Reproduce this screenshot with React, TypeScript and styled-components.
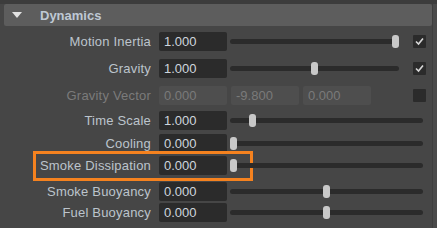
import React from "react";
import styled, { createGlobalStyle } from "styled-components";

const Global = createGlobalStyle`
  html, body { margin: 0; padding: 0; background: #464646; }
  body { font-family: "Liberation Sans", Arial, sans-serif; font-size: 13px; }
`;

const Window = styled.div`
  width: 437px;
  height: 228px;
  display: flex;
  background: #464646;
  border-top: 4px solid #3c3c3c;
  box-sizing: border-box;
  overflow: hidden;
`;

const Main = styled.div`
  flex: 1;
  display: flex;
  flex-direction: column;
  padding-left: 4px;
`;

const ScrollGutter = styled.div`
  width: 5px;
  box-sizing: border-box;
  border-left: 1px solid #3e3e3e;
  background: #4a4a4a;
`;

const Header = styled.div`
  height: 22px;
  display: flex;
  align-items: center;
  background: #5d5d5d;
  border-radius: 2px;
`;

const Caret = styled.span`
  width: 0;
  height: 0;
  margin-left: 8px;
  border-left: 5px solid transparent;
  border-right: 5px solid transparent;
  border-top: 6px solid #e2e2e2;
`;

const HeaderTitle = styled.span`
  margin-left: 18px;
  font-weight: bold;
  color: #bfc9d4;
`;

const Rows = styled.div`
  display: flex;
  flex-direction: column;
  padding-top: 6px;
`;

const Row = styled.div<{ $h: number }>`
  position: relative;
  display: flex;
  align-items: flex-start;
  height: ${(p) => p.$h}px;
  flex-shrink: 0;
`;

const Label = styled.div<{ $disabled?: boolean }>`
  width: 147px;
  margin-right: 8px;
  text-align: right;
  line-height: 19px;
  white-space: nowrap;
  letter-spacing: 0.2px;
  color: ${(p) => (p.$disabled ? "#7b7b7b" : "#bcc4cc")};
`;

const Field = styled.div<{ $disabled?: boolean }>`
  width: 68px;
  height: 19px;
  box-sizing: border-box;
  padding-left: 5px;
  line-height: 19px;
  border-radius: 2px;
  background: ${(p) => (p.$disabled ? "#4e4e4e" : "#2b2b2b")};
  color: ${(p) => (p.$disabled ? "#7a7a7a" : "#cfd6de")};
`;

const VectorFields = styled.div`
  display: flex;
  gap: 4px;
`;

const Slider = styled.div<{ $w: number }>`
  position: relative;
  margin-left: 3px;
  width: ${(p) => p.$w}px;
  height: 19px;
  display: flex;
  align-items: center;
`;

const Track = styled.div`
  width: 100%;
  height: 5px;
  border-radius: 3px;
  background: #2b2b2b;
`;

const Thumb = styled.div`
  position: absolute;
  top: 3px;
  width: 7px;
  height: 13px;
  border-radius: 3px;
  background: #c8c8c8;
`;

const Check = styled.div`
  margin-left: auto;
  margin-right: 6px;
  margin-top: 3px;
  width: 13px;
  height: 13px;
  border-radius: 1px;
  background: #2b2b2b;
  display: flex;
  align-items: center;
  justify-content: center;
`;

const Highlight = styled.div`
  position: absolute;
  left: 29px;
  top: -5px;
  width: 220px;
  height: 30px;
  box-sizing: border-box;
  border: 3px solid #f5821f;
  pointer-events: none;
`;

type RowData = {
  label: string;
  value: string;
  h: number;
  pos?: number;
  check?: boolean;
  vector?: string[];
  highlight?: boolean;
};

const rows: RowData[] = [
  { label: "Motion Inertia", value: "1.000", h: 27, pos: 1, check: true },
  { label: "Gravity", value: "1.000", h: 27, pos: 0.5, check: true },
  { label: "Gravity Vector", value: "", h: 25, vector: ["0.000", "-9.800", "0.000"] },
  { label: "Time Scale", value: "1.000", h: 23, pos: 0.1 },
  { label: "Cooling", value: "0.000", h: 22, pos: 0 },
  { label: "Smoke Dissipation", value: "0.000", h: 26, pos: 0, highlight: true },
  { label: "Smoke Buoyancy", value: "0.000", h: 21, pos: 0.5 },
  { label: "Fuel Buoyancy", value: "0.000", h: 25, pos: 0.5 },
];

const CheckMark = () => (
  <svg width="11" height="11" viewBox="0 0 11 11">
    <polyline points="2,5.5 4.5,8 9,2.5" fill="none" stroke="#d8d8d8" strokeWidth="1.6" />
  </svg>
);

export default function App() {
  return (
    <>
      <Global />
      <Window>
        <Main>
          <Header>
            <Caret />
            <HeaderTitle>Dynamics</HeaderTitle>
          </Header>
          <Rows>
            {rows.map((r) => {
              const w = r.check ? 169 : 193;
              return (
                <Row key={r.label} $h={r.h}>
                  {r.highlight && <Highlight />}
                  <Label $disabled={!!r.vector}>{r.label}</Label>
                  {r.vector ? (
                    <>
                      <VectorFields>
                        {r.vector.map((v, i) => (
                          <Field key={i} $disabled>
                            {v}
                          </Field>
                        ))}
                      </VectorFields>
                      <Check />
                    </>
                  ) : (
                    <>
                      <Field>{r.value}</Field>
                      <Slider $w={w}>
                        <Track />
                        <Thumb style={{ left: `${(r.pos ?? 0) * (w - 7)}px` }} />
                      </Slider>
                      {r.check && (
                        <Check>
                          <CheckMark />
                        </Check>
                      )}
                    </>
                  )}
                </Row>
              );
            })}
          </Rows>
        </Main>
        <ScrollGutter />
      </Window>
    </>
  );
}
